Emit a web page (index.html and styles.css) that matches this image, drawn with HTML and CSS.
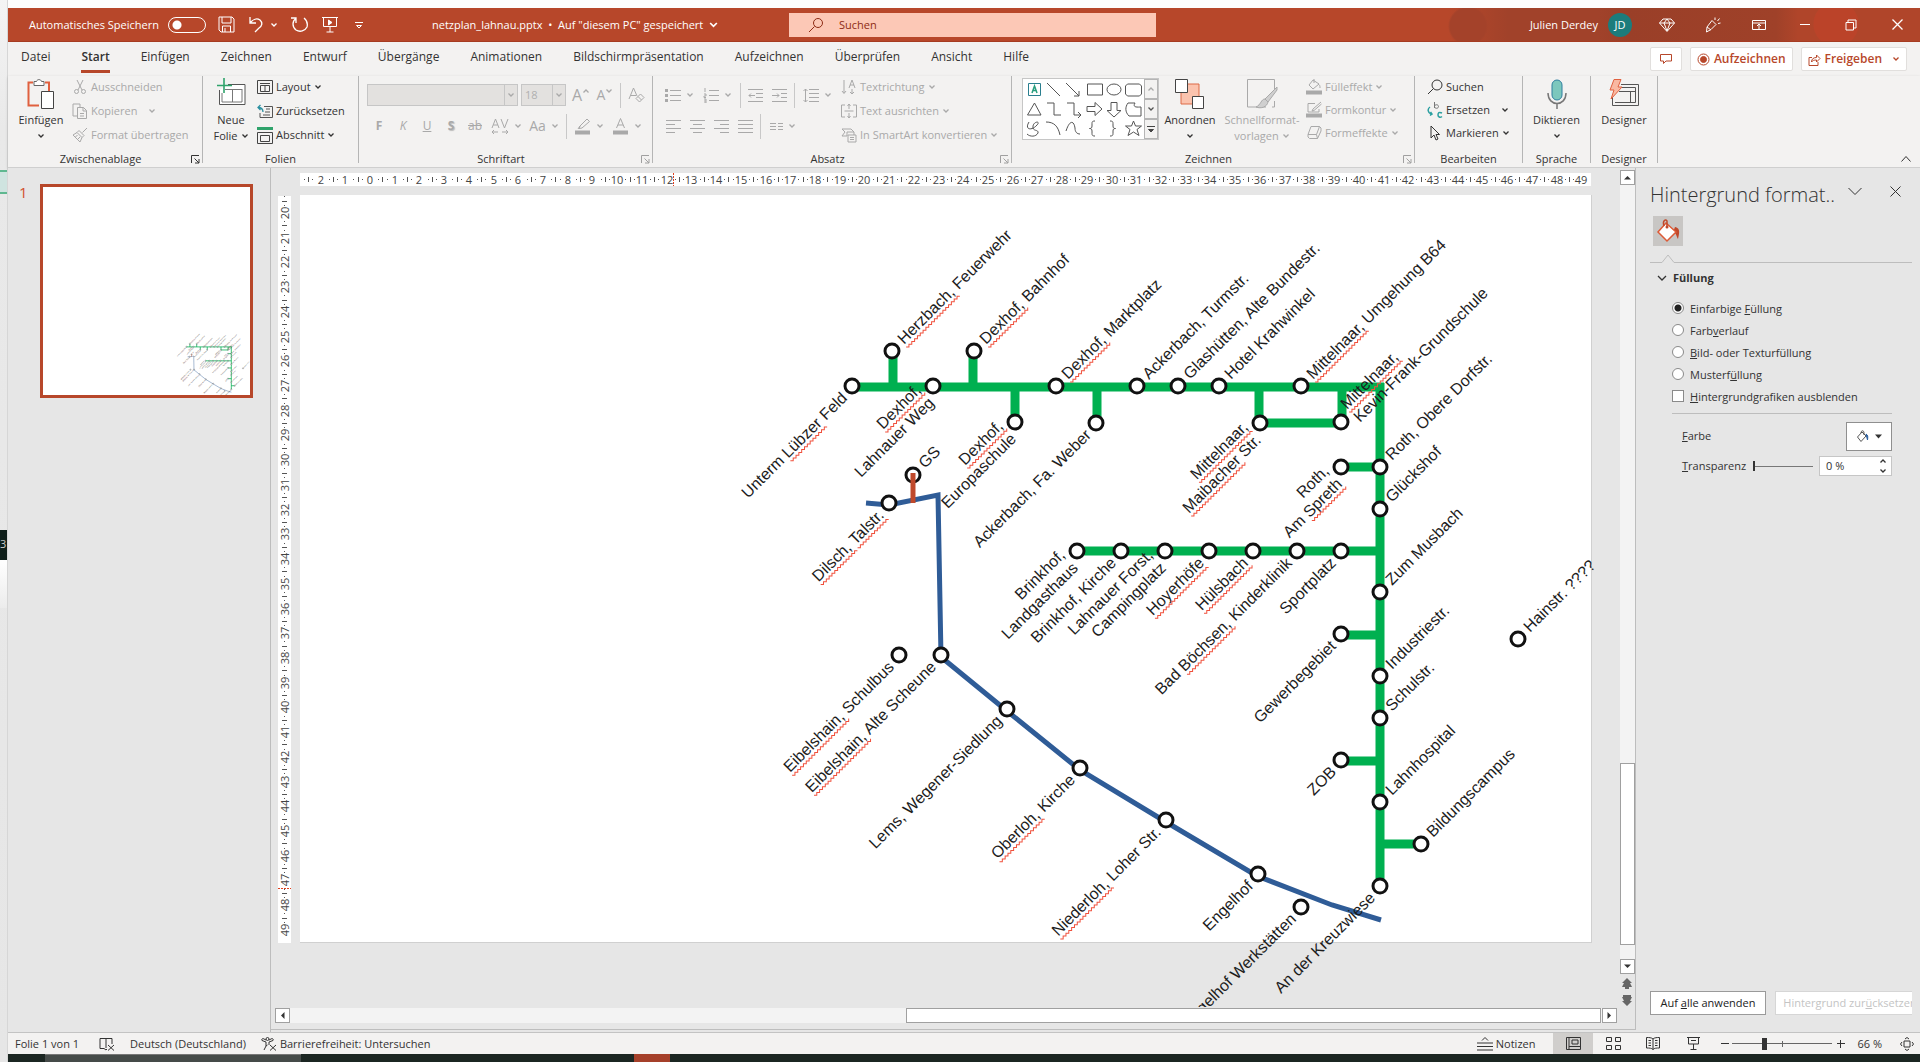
FILE: index.html
```html
<!DOCTYPE html>
<html lang="de">
<head>
<meta charset="utf-8">
<title>netzplan_lahnau.pptx - PowerPoint</title>
<link rel="stylesheet" href="styles.css">
</head>
<body>
<svg class="defs" width="0" height="0" aria-hidden="true">
  <symbol id="chev" viewBox="0 0 8 6"><path d="M1.500 1.500 4 4l2.500-2.500" fill="none" stroke="currentColor" stroke-width="1.300"/></symbol>
  <symbol id="launch" viewBox="0 0 9 9"><path d="M.5 8V.5H8M3.500 3.500 8 8M8 4v4H4" fill="none" stroke="currentColor"/></symbol>
</svg>

<div class="behind">
  <span class="behind-chip"></span>
  <span class="behind-dark">3</span>
  <span class="behind-light"></span>
</div>

<div class="app">
  <header class="titlebar">
    <div class="quick">
      <label class="autosave" for="autosave">Automatisches Speichern</label>
      <input class="toggle" type="checkbox" id="autosave">
      <button class="tb save" aria-label="Speichern"><svg width="17" height="17" viewBox="0 0 17 17"><path d="M1 1h13l2 2v13H3l-2-2zM4 1v6h9V1M4.500 16v-6h8v6M7 12v4"/></svg></button>
      <button class="tb undo" aria-label="Rückgängig"><svg width="17" height="17" viewBox="0 0 17 17"><path d="M2 1v6h6M2 7c3-4 7-5 10-3 3 3 2 6-1 8l-4 4" stroke-width="1.300"/></svg><svg class="chev"><use href="#chev"/></svg></button>
      <button class="tb" aria-label="Wiederholen"><svg width="18" height="17" viewBox="0 0 18 17"><path d="M5 2.500C1 5 1 11 5 14c4 2.500 9 1 11-3 1-4-.5-7-3-9M5 7V2H0" stroke-width="1.300"/></svg></button>
      <button class="tb" aria-label="Bildschirmpräsentation"><svg width="16" height="17" viewBox="0 0 16 17"><path d="M0 1.500h16M1.500 2v8.500h13V2M8 10.500V16M4.500 16h7"/><path class="solid" d="M6.500 4v5L10 6.500z"/></svg></button>
      <button class="tb" aria-label="Symbolleiste anpassen"><svg width="8" height="8" viewBox="0 0 8 8"><path d="M0 1.500h8M1.500 4.500 4 7l2.500-2.500z"/></svg></button>
    </div>
    <button class="doc-title">netzplan_lahnau.pptx&nbsp; •&nbsp; Auf "diesem PC" gespeichert <svg class="chev big"><use href="#chev"/></svg></button>
    <label class="search">
      <svg width="16" height="16" viewBox="0 0 16 16"><circle cx="10" cy="6" r="4.500"/><path d="M6.500 9.500 1 15"/></svg>
      <input type="text" placeholder="Suchen" aria-label="Suchen">
    </label>
    <div class="account">
      <span>Julien Derdey</span><span class="avatar">JD</span>
    </div>
    <div class="winctl">
      <button aria-label="Premium"><svg width="16" height="16" viewBox="0 0 16 16"><path d="M4 2h8l3.500 4L8 14.500.5 6zM.5 6h15M8 2 5 6l3 8 3-8z"/></svg></button>
      <button aria-label="Zeichenstift"><svg width="16" height="16" viewBox="0 0 16 16"><path d="M7 3.500 11 7.500 6 12.500 1.500 15 2 10zM2 10l4 3M10 3V.5M12.500 4l2-2.500M13 6.500l2.500-.5"/></svg></button>
      <button aria-label="Menüband-Anzeigeoptionen"><svg width="14" height="14" viewBox="0 0 14 14"><path d="M.5 2.500h13v9H.5zM.5 5h13M7 11V6.500M5 8l2-2 2 2"/></svg></button>
      <button aria-label="Minimieren"><svg width="10" height="10" viewBox="0 0 10 10"><path d="M0 4.500h10"/></svg></button>
      <button aria-label="Wiederherstellen"><svg width="12" height="12" viewBox="0 0 12 12"><path d="M1 3.500h7.500V11H1zM3 3.500V1h8v8H8.500"/></svg></button>
      <button aria-label="Schließen"><svg width="11" height="11" viewBox="0 0 11 11"><path d="m.5.5 10 10M10.500.5l-10 10" stroke-width="1.300"/></svg></button>
    </div>
  </header>

  <nav class="tabs">
    <a href="#">Datei</a><a href="#" class="on">Start</a><a href="#">Einfügen</a><a href="#">Zeichnen</a><a href="#">Entwurf</a><a href="#">Übergänge</a><a href="#">Animationen</a><a href="#">Bildschirmpräsentation</a><a href="#">Aufzeichnen</a><a href="#">Überprüfen</a><a href="#">Ansicht</a><a href="#">Hilfe</a>
    <div class="tab-actions">
      <button aria-label="Kommentare" class="comment"><svg width="12" height="12" viewBox="0 0 12 12"><path d="M.5 1.500h11V8H6l-2.500 2.500V8h-3z"/></svg></button>
      <button><svg width="13" height="13" viewBox="0 0 13 13"><circle cx="6.500" cy="6.500" r="5.500"/><circle class="dot" cx="6.500" cy="6.500" r="3"/></svg>Aufzeichnen</button>
      <button><svg width="13" height="13" viewBox="0 0 13 13"><path d="M4 4.500H1v8h9V9M3.500 9c0-3 2-4.500 5-4.500V2L12 5.500 8.500 9V7C6 7 4.500 7.500 3.500 9z"/></svg>Freigeben<svg class="chev push"><use href="#chev"/></svg></button>
    </div>
  </nav>

  <section class="ribbon">
    <div class="group g-clip">
      <div class="content">
        <button class="bigbtn"><svg width="28" height="30" viewBox="0 0 28 30"><path d="M6 3.500H1.500v23H12M18 3.500h4V12" fill="none" stroke="#e0603f" stroke-width="2"/><path d="M7 6.500v-4h2.500c.5-2.500 4.500-2.500 5 0H17v4z" fill="#fff" stroke="#666"/><path d="M14.500 12.500h12v17h-12z" fill="#fff" stroke="#444"/></svg><span>Einfügen</span><svg class="chev"><use href="#chev"/></svg></button>
        <div class="rows off">
          <button><svg width="16" height="16" viewBox="0 0 16 16"><path d="M5 1l5 10M11 1 6 11"/><circle cx="4.500" cy="12.500" r="2"/><circle cx="11.500" cy="12.500" r="2"/></svg>Ausschneiden</button>
          <button><svg width="16" height="16" viewBox="0 0 16 16"><path d="M5 13H1V1h7v3M5.500 4.500h6l3 3v8h-9zM11 4.500V8h3.500M8 10.500h4M8 13h4"/></svg>Kopieren <svg class="chev gap"><use href="#chev"/></svg></button>
          <button><svg width="16" height="16" viewBox="0 0 16 16"><path d="M15 1 10.500 5.500M7 3.500l5 5-2 2-5-5zM5 5.500 1 8l7 7 2-4.500M3.500 9.500l2-1M6 12l2-2"/></svg>Format übertragen</button>
        </div>
      </div>
      <footer><span>Zwischenablage</span><button class="launch" aria-label="Dialog"><svg><use href="#launch"/></svg></button></footer>
    </div>

    <div class="group g-slides">
      <div class="content">
        <button class="bigbtn"><svg width="30" height="30" viewBox="0 0 30 30"><path d="M12 6.500h17v20H3.500V12" fill="#fff" stroke="#555"/><path d="M9 11.500h17M6 15v9h20V11M16.500 12v12" fill="none" stroke="#777"/><path d="M8 0v15M1 7.500h15" stroke="#2fa36b" stroke-width="1.600"/></svg><span>Neue</span><span>Folie <svg class="chev"><use href="#chev"/></svg></span></button>
        <div class="rows">
          <button><svg width="16" height="14" viewBox="0 0 16 14"><path d="M.5.5h15v13H.5zM3 3.500h10M3.500 5.500v6h9v-6zM8 5.500v6" stroke="#444"/></svg>Layout <svg class="chev"><use href="#chev"/></svg></button>
          <button><svg width="16" height="15" viewBox="0 0 16 15"><path d="M7 2.500h8.500v11H3V9M9 5h4M8 8h5M6 11h7" stroke="#555"/><path d="M6 8c0-3-1-4.500-5-4.500M3.500 1 1 3.500 3.500 6" stroke="#2a8fa0" stroke-width="1.300"/></svg>Zurücksetzen</button>
          <button><svg width="16" height="17" viewBox="0 0 16 17"><path d="M0 1.500h16" stroke="#2fa36b" stroke-width="3"/><path d="M.5 5.500h15v11H.5zM3.500 8.500h9v6h-9z" stroke="#444"/></svg>Abschnitt <svg class="chev"><use href="#chev"/></svg></button>
        </div>
      </div>
      <footer><span>Folien</span></footer>
    </div>

    <div class="group g-font">
      <div class="content tools off">
        <div class="line">
          <span class="combo wide"><select disabled aria-label="Schriftart"><option></option></select><svg class="chev"><use href="#chev"/></svg></span>
          <span class="combo"><select disabled aria-label="Schriftgrad"><option>18</option></select><svg class="chev"><use href="#chev"/></svg></span>
          <button class="t" aria-label="Schrift vergrößern"><span class="fs16">A</span><svg class="chev flip"><use href="#chev"/></svg></button>
          <button class="t" aria-label="Schrift verkleinern"><span class="fs14">A</span><svg class="chev lift"><use href="#chev"/></svg></button>
          <i class="sep"></i>
          <button class="t" aria-label="Formatierung löschen"><svg width="17" height="17" viewBox="0 0 17 17"><path d="M1 12 5.500 1 9 9M3 8.500h5M12.500 7 16 10.500 11.500 15 8 11.500zM10 9.500l3.500 3.500"/></svg></button>
        </div>
        <div class="line">
          <button class="t"><b>F</b></button><button class="t"><i>K</i></button><button class="t"><u>U</u></button><button class="t"><b class="shade">S</b></button><button class="t"><s>ab</s></button>
          <button class="t dd" aria-label="Zeichenabstand"><svg width="18" height="17" viewBox="0 0 18 17"><path d="M1 10 4.500 1 8 10M2.300 7h4.400M10 1l3.500 9L17 1M1 14h6M3 12l-2 2 2 2M11 14h6M15 12l2 2-2 2"/></svg><svg class="chev"><use href="#chev"/></svg></button>
          <button class="t dd"><span class="fs14">Aa</span><svg class="chev"><use href="#chev"/></svg></button>
          <i class="sep"></i>
          <button class="t dd" aria-label="Texthervorhebungsfarbe"><svg width="17" height="17" viewBox="0 0 17 17"><path d="M13 1l2.500 2.500L8 10l-3 .5L6 8zM6 8 4 11"/><path d="M1 14.500h15" stroke-width="4"/></svg><svg class="chev"><use href="#chev"/></svg></button>
          <button class="t dd" aria-label="Schriftfarbe"><svg width="17" height="17" viewBox="0 0 17 17"><path d="M4.500 10 8.500.5l4 9.500M6 7h5"/><path d="M1 14.500h15" stroke-width="4"/></svg><svg class="chev"><use href="#chev"/></svg></button>
        </div>
      </div>
      <footer class="dim"><span>Schriftart</span><button class="launch" aria-label="Dialog"><svg><use href="#launch"/></svg></button></footer>
    </div>

    <div class="group g-para">
      <div class="content off">
        <div class="tools">
          <div class="line">
            <button class="t dd" aria-label="Aufzählung"><svg width="16" height="15" viewBox="0 0 16 15"><path d="M5 2.500h11M5 7.500h11M5 12.500h11"/><path d="M0 2.500h3M0 7.500h3M0 12.500h3" stroke-width="3"/></svg><svg class="chev"><use href="#chev"/></svg></button>
            <button class="t dd" aria-label="Nummerierung"><svg width="16" height="15" viewBox="0 0 16 15"><path d="M6 2.500h10M6 7.500h10M6 12.500h10M2 0v4M1 6h2v2H1v1.500h2M1 11h2v4H1M1 13h2"/></svg><svg class="chev"><use href="#chev"/></svg></button>
            <i class="sep"></i>
            <button class="t" aria-label="Einzug verkleinern"><svg width="15" height="15" viewBox="0 0 15 15"><path d="M0 1.500h15M8 5.500h7M8 9.500h7M0 13.500h15M1 7.500h6M3 5.500l-2 2 2 2"/></svg></button>
            <button class="t" aria-label="Einzug vergrößern"><svg width="15" height="15" viewBox="0 0 15 15"><path d="M0 1.500h15M9 5.500h6M9 9.500h6M0 13.500h15M0 7.500h7M5 5.500l2 2-2 2"/></svg></button>
            <i class="sep"></i>
            <button class="t dd" aria-label="Zeilenabstand"><svg width="16" height="15" viewBox="0 0 16 15"><path d="M6 1.500h10M6 5.500h10M6 9.500h10M6 13.500h10M2.500 1v13M.5 3l2-2 2 2M.5 12l2 2 2-2"/></svg><svg class="chev"><use href="#chev"/></svg></button>
          </div>
          <div class="line">
            <button class="t" aria-label="Linksbündig"><svg width="15" height="14" viewBox="0 0 15 14"><path d="M0 1.500h15M0 5.500h9M0 9.500h15M0 13.500h9"/></svg></button>
            <button class="t" aria-label="Zentriert"><svg width="15" height="14" viewBox="0 0 15 14"><path d="M0 1.500h15M3 5.500h9M0 9.500h15M3 13.500h9"/></svg></button>
            <button class="t" aria-label="Rechtsbündig"><svg width="15" height="14" viewBox="0 0 15 14"><path d="M0 1.500h15M6 5.500h9M0 9.500h15M6 13.500h9"/></svg></button>
            <button class="t" aria-label="Blocksatz"><svg width="15" height="14" viewBox="0 0 15 14"><path d="M0 1.500h15M0 5.500h15M0 9.500h15M0 13.500h15"/></svg></button>
            <i class="sep"></i>
            <button class="t dd" aria-label="Spalten"><svg width="13" height="9" viewBox="0 0 13 9"><path d="M0 1.500h6M0 4.500h6M0 7.500h6M8 1.500h5M8 4.500h5M8 7.500h5"/></svg><svg class="chev"><use href="#chev"/></svg></button>
          </div>
        </div>
        <div class="rows">
          <button><svg width="16" height="16" viewBox="0 0 16 16"><path d="M3 1v13M1 12l2 2.500L5 12M8 9l3-8 3 8M9 6h4M11 10v5M9 13l2 2 2-2"/></svg>Textrichtung <svg class="chev"><use href="#chev"/></svg></button>
          <button><svg width="16" height="16" viewBox="0 0 16 16"><path d="M4 2H.5v12H4M12 2h3.500v12H12M8 1v5M6.500 3 8 1l1.500 2M8 15v-5M6.500 13 8 15l1.500-2M3.500 8h9"/></svg>Text ausrichten <svg class="chev"><use href="#chev"/></svg></button>
          <button><svg width="16" height="16" viewBox="0 0 16 16"><path d="M1 2h9l3 3M1 2l3 3-3 4h5V5h7v3M7 8h8v7H7zM9 10.500h4M9 12.500h4"/></svg>In SmartArt konvertieren <svg class="chev"><use href="#chev"/></svg></button>
        </div>
      </div>
      <footer class="dim"><span>Absatz</span><button class="launch" aria-label="Dialog"><svg><use href="#launch"/></svg></button></footer>
    </div>

    <div class="group g-draw">
      <div class="content">
        <div class="gallery">
          <svg width="121" height="60" viewBox="0 0 121 60">
            <path d="M5.500 4.500h12v12h-12z" stroke="#2a7f8f"/><path d="M9 14l2.500-7 2.500 7M10 11.500h3" stroke="#2a9f7f" stroke-width="1.500"/>
            <path d="m24 4 13 13M43 4l13 13M56 12v5h-5M64.500 5h15v11h-15zM104.500 5h12l2 2v8l-2 2h-12l-2-2V7z"/><ellipse cx="91" cy="10.500" rx="7" ry="5.500"/>
            <path d="M4.500 36 11.500 24l6.500 12zM24 24h7v12h7M44 24h7v12h7M55 33l3 3-3 3M64 27.500h8v-4l7 6.500-7 6.500v-4h-8zM88 23.500h6v8h4L91 38l-7-6.500h4zM105 24h7c-3 5 3 4 6 4v9h-12c-4-4-4-9-1-13z"/>
            <path d="M6 43c-5 8 3 9 8 3 4-4-3-4-4 1-1 6 6 3 5 7-2 4-8 4-11 1M23 43c8 0 12 4 14 13M43 52c4-12 8-10 9-3 0 4 2 6 5 6M72 42c-3 0-3 1-3 3v2c0 2-1 2.500-2.500 2.500C68 49.500 69 50 69 52v2c0 2 0 3 3 3M87 42c3 0 3 1 3 3v2c0 2 1 2.500 2.500 2.500C91 49.500 90 50 90 52v2c0 2 0 3-3 3M110.500 42l2 5h6l-4.500 3.500 2 6-5.500-3.500-5.500 3.500 2-6-4.500-3.500h6z"/>
          </svg>
          <div class="gscroll">
            <button class="off" aria-label="Zurück"><svg class="chev flip"><use href="#chev"/></svg></button>
            <button aria-label="Weiter"><svg class="chev"><use href="#chev"/></svg></button>
            <button aria-label="Mehr"><svg width="8" height="8" viewBox="0 0 8 8"><path d="M0 1.500h8M1.500 4.500 4 7l2.500-2.500z" stroke="#444" fill="#444"/></svg></button>
          </div>
        </div>
        <button class="bigbtn arrange"><svg width="30" height="30" viewBox="0 0 30 30"><path d="M6 5h18v20H6z" fill="#fbc3ae" stroke="#dd6a47"/><path d="M.5.5h12v13H.5zM17.500 17.500h11v12h-11z" fill="#fff" stroke="#444"/></svg><span>Anordnen</span><svg class="chev"><use href="#chev"/></svg></button>
        <button class="bigbtn styles off"><svg width="32" height="30" viewBox="0 0 32 30"><path d="M20 28H1.500V.5h27V10M28.500 22v6H26"/><path d="M31 8 19 20l3 3 9-12zM19 20c-4 0-4 6-9 8 5 2 11 0 12-5z" fill="#cfcfcf"/></svg><span>Schnellformat-</span><span>vorlagen <svg class="chev"><use href="#chev"/></svg></span></button>
        <div class="rows tight off">
          <button><svg width="16" height="17" viewBox="0 0 16 17"><path d="M7 2 3 7l4 4 6-5zM8 5V1M12 6c2 1 2 2 2 4"/><path d="M0 14.500h16" stroke-width="4"/></svg>Fülleffekt <svg class="chev"><use href="#chev"/></svg></button>
          <button><svg width="16" height="17" viewBox="0 0 16 17"><path d="M9 2.500H2V11h11V8M15 1 7 8l-1 2 2-.5L15.500 3"/><path d="M0 14.500h16" stroke-width="4"/></svg>Formkontur <svg class="chev"><use href="#chev"/></svg></button>
          <button><svg width="16" height="15" viewBox="0 0 16 15"><path d="M5 1.500h8.500l-3 8H2zM2 9.500V12l1.500 1.500h8L15 6V3l-1.500-1.500M10.500 9.500l1 4"/></svg>Formeffekte <svg class="chev"><use href="#chev"/></svg></button>
        </div>
      </div>
      <footer class="dim"><span>Zeichnen</span><button class="launch" aria-label="Dialog"><svg><use href="#launch"/></svg></button></footer>
    </div>

    <div class="group g-edit">
      <div class="content">
        <div class="rows tight">
          <button><svg width="16" height="16" viewBox="0 0 16 16"><circle cx="10" cy="6" r="5"/><path d="M6.500 9.500 1 15"/></svg>Suchen</button>
          <button><svg width="16" height="16" viewBox="0 0 16 16"><path d="M7.500 0v6M7.500 4c1-2 4-1.500 4 .5s-3 2.500-4 .5" stroke="#777"/><path d="M3 5c-3 2-2 6 1 7M3 13.500 5 12l-1.500-2M15 11c-3-1.500-4 0-4 2s2 3 4 1.500" stroke="#2a9fa0" stroke-width="1.500"/></svg>Ersetzen <svg class="chev gap"><use href="#chev"/></svg></button>
          <button><svg width="16" height="16" viewBox="0 0 16 16"><path d="M4 1v12l3-3 2 5 2-1-2-4.500h3.500z"/></svg>Markieren <svg class="chev"><use href="#chev"/></svg></button>
        </div>
      </div>
      <footer><span>Bearbeiten</span></footer>
    </div>

    <div class="group g-voice">
      <div class="content">
        <button class="bigbtn"><svg width="20" height="30" viewBox="0 0 20 30"><rect x="5" y="1" width="10" height="20" rx="5" fill="#7cc7bd" stroke="#2f7f9f"/><path d="M1 14c0 14 18 14 18 0M10 24v6" stroke="#777" stroke-width="1.500"/></svg><span>Diktieren</span><svg class="chev"><use href="#chev"/></svg></button>
      </div>
      <footer><span>Sprache</span></footer>
    </div>

    <div class="group g-designer">
      <div class="content">
        <button class="bigbtn"><svg width="30" height="30" viewBox="0 0 30 30"><path d="M3.500 17v9.500h26v-21H12M6 23.500h20.500v-15H12M10 12.500h16.500M21.500 12.500v11" stroke="#555" fill="none"/><path d="M5 .5h7L9 8h4L2 20l3-9H1z" fill="#f9b9a2" stroke="#e0603f"/></svg><span>Designer</span></button>
      </div>
      <footer><span>Designer</span></footer>
    </div>
    <button class="collapse" aria-label="Menüband reduzieren"><svg width="12" height="8" viewBox="0 0 12 8"><path d="m1.500 6.500 4.500-5 4.500 5"/></svg></button>
  </section>

  <main class="body">
    <aside class="slides">
      <span class="num">1</span>
      <button class="thumb" aria-label="Folie 1"><svg viewBox="43 187 207 208"><use href="#network" transform="translate(114 314) scale(.085)"/></svg></button>
    </aside>

    <section class="workspace">
      <svg class="hruler" id="hruler"></svg>
      <svg class="vruler" id="vruler"></svg>
      <div class="canvas">
        <svg width="1318" height="814" viewBox="300 195 1318 814">
          <rect x="299.500" y="194.500" width="1292" height="748" fill="#fff" stroke="#d0d0d0"/>
          <g id="network">
            <g class="green">
              <path d="M852 387H1384M1380 383V886M893 387V351M973 387V351M1015 387V422M1097 387V422M1259 387V423H1342V387M1341 467H1380M1077 551H1380M1341 635H1380M1341 761H1380M1380 844H1421"/>
            </g>
            <path class="blue" d="M866 503 889 505 938 495 941 657 1007 711 1080 770 1166 822 1257 876 1332 905 1381 920"/>
            <g id="stops"></g>
            <path class="orange" d="M913 473V503"/>
            <g id="labels"></g>
          </g>
        </svg>
      </div>
      <div class="vscroll">
        <button aria-label="Nach oben"><svg width="7" height="5" viewBox="0 0 7 5"><path d="M0 4.500 3.500 1 7 4.500z"/></svg></button>
        <div class="track"><div class="grip"></div></div>
        <button aria-label="Nach unten"><svg width="7" height="5" viewBox="0 0 7 5"><path d="M0 .5 3.500 4 7 .5z"/></svg></button>
        <a href="#" aria-label="Vorherige Folie"><svg width="10" height="12" viewBox="0 0 10 12"><path d="M5 0 0 5h2L0 9h3v2h4V9h3L8 5h2z"/></svg></a>
        <a href="#" aria-label="Nächste Folie"><svg width="10" height="12" viewBox="0 0 10 12"><path d="M5 12 0 7h2L0 3h1V1h8v2h1L8 7h2z"/></svg></a>
      </div>
      <div class="hscroll">
        <button aria-label="Nach links"><svg width="5" height="7" viewBox="0 0 5 7"><path d="M4.500 0 1 3.500 4.500 7z"/></svg></button>
        <div class="track"><div class="grip"></div></div>
        <button aria-label="Nach rechts"><svg width="5" height="7" viewBox="0 0 5 7"><path d="M.5 0 4 3.500.5 7z"/></svg></button>
      </div>
    </section>

    <aside class="pane">
      <header><h2>Hintergrund format..</h2>
        <button aria-label="Optionen"><svg width="14" height="9" viewBox="0 0 14 9"><path d="m.5 1 6.500 6.500L13.500 1"/></svg></button>
        <button aria-label="Schließen"><svg width="11" height="11" viewBox="0 0 11 11"><path d="m.5.5 10 10M10.500.5l-10 10"/></svg></button></header>
      <button class="filltab" aria-label="Füllung"><svg width="24" height="24" viewBox="0 0 24 24"><path d="M19 8c6 1 4 7 3 12-2-3-1-5-5-7z" fill="#c0492b"/><path d="m10 4 10 9-9 9-9-9z" fill="#fff" stroke="#dd5a36" stroke-width="1.500"/><path d="M8 7C6 1 10 0 11 2v6" fill="none" stroke="#c0492b" stroke-width="1.500"/><circle cx="11" cy="8" r="1.500" fill="#c0492b"/></svg></button>
      <svg class="notch" height="9"><path d="M0 8.500H12L18 1l6 7.500H262"/></svg>
      <form>
        <h3><svg width="10" height="7" viewBox="0 0 10 7"><path d="M1 1l4 4 4-4" stroke-width="1.300"/></svg>Füllung</h3>
        <label><input type="radio" name="fill" checked>Einfarbige <u>F</u>üllung</label>
        <label><input type="radio" name="fill">Farb<u>v</u>erlauf</label>
        <label><input type="radio" name="fill"><span><u>B</u>ild- oder Texturfüllung</span></label>
        <label><input type="radio" name="fill">Musterf<u>ü</u>llung</label>
        <label><input type="checkbox"><span><u>H</u>intergrundgrafiken ausblenden</span></label>
        <hr>
        <div class="prop"><label for="color"><u>F</u>arbe</label><button type="button" id="color" class="color" aria-label="Farbe"><svg width="13" height="13" viewBox="0 0 13 13"><path d="M6 2 1.500 7 5 11.500 10 6z" fill="#fff" stroke="#555"/><path d="M5 3c0-3 3-3 3 0v2" fill="none" stroke="#555"/><path d="M10 4c2 1 2 3 1.500 6z" fill="#2a5fa0" stroke="#2a5fa0"/></svg><svg width="7" height="5" viewBox="0 0 7 5"><path d="M0 .5h7L3.500 4.500z" fill="#333"/></svg></button></div>
        <div class="prop"><label for="alpha"><u>T</u>ransparenz</label><input type="range" id="alpha" value="0"><span class="spin"><input type="text" value="0 %" aria-label="Transparenz in Prozent"><span><svg class="chev flip"><use href="#chev"/></svg><svg class="chev"><use href="#chev"/></svg></span></span></div>
      </form>
      <footer><button>Auf <u>a</u>lle anwenden</button><button disabled>Hintergrund zur<u>ü</u>cksetzen</button></footer>
    </aside>
  </main>

  <footer class="status">
    <span class="s-slide">Folie 1 von 1</span>
    <button class="s-spell" aria-label="Rechtschreibung"><svg width="16" height="14" viewBox="0 0 16 14"><path d="M7 1v10M7 1.500H1v10h4l2 1.500 1-1M7 1.500h6V7M9 8l6 5.500M15 8l-6 5.500"/></svg></button>
    <button class="s-lang">Deutsch (Deutschland)</button>
    <button class="s-acc"><svg width="16" height="14" viewBox="0 0 16 14"><circle cx="6.500" cy="2" r="1.500"/><path d="M1 3.500 5 5v4l-2 4M12 3.500 8 5v3M5 9l1.500-1M1 3.500C0 2 2 1 3 2l2 1M12 3.500c1-1.500-1-2.500-2-1.500L8 3M9 8l6 5.500M15 8l-6 5.500"/></svg>Barrierefreiheit: Untersuchen</button>
    <div class="views">
      <button class="notes"><svg width="16" height="14" viewBox="0 0 16 14"><path d="M0 6h16M0 9.500h16M0 13h16M5 3.500l3-3 3 3"/></svg>Notizen</button>
      <button class="view on" aria-label="Normal"><svg width="15" height="13" viewBox="0 0 15 13"><path d="M.5.5h14v12H.5zM3 .5v12M3 9.500h11M6 3h6v4H6z"/></svg></button>
      <button class="view" aria-label="Foliensortierung"><svg width="15" height="13" viewBox="0 0 15 13"><path d="M.5.5h5v4h-5zM9.500.5h5v4h-5zM.5 8.500h5v4h-5zM9.500 8.500h5v4h-5z"/></svg></button>
      <button class="view" aria-label="Leseansicht"><svg width="14" height="13" viewBox="0 0 14 13"><path d="M7 2v10.500M7 2C5.500.5 3 .5.5.5V11c3 0 5 0 6.500 1.500C8.500 11 10.500 11 13.500 11V.5C11 .5 8.500.5 7 2M2.500 3.500H5M2.500 6H5M2.500 8.500H5M9 3.500h2.500M9 6h2.500M9 8.500h2.500"/></svg></button>
      <button class="view" aria-label="Bildschirmpräsentation"><svg width="13" height="13" viewBox="0 0 13 13"><path d="M0 .5h13M1.500.5V7h10V.5M6.500 7v5.500M3.500 12.500h6M4 3.500h5"/></svg></button>
      <button class="zoomb" aria-label="Verkleinern"><svg width="8" height="8" viewBox="0 0 8 8"><path d="M0 3.500h8"/></svg></button>
      <input type="range" class="zoom" min="10" max="190" value="66" aria-label="Zoom">
      <button class="zoomb" aria-label="Vergrößern"><svg width="8" height="8" viewBox="0 0 8 8"><path d="M0 3.500h8M3.500 0v8"/></svg></button>
      <button class="pct">66 %</button>
      <button class="fit" aria-label="An Fenster anpassen"><svg width="14" height="14" viewBox="0 0 14 14"><path d="M4 4h6v6H4zM5 2l2-1.500L9 2M5 12l2 1.500L9 12M2 5 .5 7 2 9M12 5l1.500 2L12 9"/></svg></button>
    </div>
  </footer>
  <div class="taskbar"><i class="field"></i><i class="active"></i></div>
</div>
<script src="script.js"></script>
</body>
</html>
```
FILE: styles.css
```css
* { box-sizing: border-box; }
body {
  margin: 0; height: 100vh; display: flex; overflow: hidden;
  font: 11px/16px "Open Sans", "Noto Sans", sans-serif; color: #333; background: #e6e6e6;
}
button, input, select { font: inherit; color: inherit; margin: 0; padding: 0; border: 0; background: none; }
button { display: flex; align-items: center; justify-content: center; white-space: nowrap; }
a { color: inherit; text-decoration: none; }
svg { display: block; flex: none; fill: none; stroke: currentColor; }
h2, h3 { margin: 0; }
.defs { position: absolute; }
.chev { width: 8px; height: 6px; stroke: none; }
.chev.big { width: 11px; height: 8px; }
.chev.flip { transform: rotate(180deg); }
.chev.gap { margin-left: 8px; }
.off { color: #a9a9a9; }

/* sliver of the window behind */
.behind { flex: 0 0 8px; display: flex; flex-direction: column; border-right: 1px solid #d6d6d6; background: linear-gradient(#f4f4f4, #e9e9e9 12%, #e6e6e6); overflow: hidden; }
.behind-chip { height: 24px; margin-top: 170px; background: #cfe4e0; border-top: 2px solid #5fb890; border-bottom: 2px solid #5fb890; }
.behind-dark { height: 30px; margin-top: 336px; background: #10201b; color: #ccc; line-height: 28px; }
.behind-light { height: 48px; background: linear-gradient(#fff, #ececec); }

.app { flex: 1; min-width: 0; display: flex; flex-direction: column; border-top: 8px solid #fdfdfd; }

/* title bar */
.titlebar {
  flex: 0 0 34px; display: flex; align-items: center; color: #fff; border-bottom: 1px solid #a63c22;
  background:
    radial-gradient(circle at 1460px 18px, #a4422a 18px, transparent 20px),
    radial-gradient(circle at 1828px 16px, #bb4329 22px, transparent 23px),
    linear-gradient(90deg, transparent 1440px, #a1422a 1500px, #a1422a 1590px, #9a3f28 1620px, #9f4129 1768px, #b0452a 1790px) #b7472a;
}
.quick { width: 424px; padding-left: 21px; display: flex; align-items: center; }
.toggle { appearance: none; width: 38px; height: 16px; margin: 0 12px 0 9px; border: 1px solid #fff; border-radius: 8px; background: radial-gradient(circle at 8px 7px, #fff 4px, transparent 5px); }
.tb { margin-right: 13px; gap: 5px; }
.tb:nth-last-child(2) { margin-right: 17px; }
.tb:nth-last-child(n+3) + .tb { margin-left: 0; }
.tb .solid { fill: #fff; }
.doc-title { gap: 5px; width: 300px; justify-content: flex-start; }
.search { width: 367px; height: 24px; margin-left: 57px; display: flex; align-items: center; gap: 15px; padding-left: 19px; background: #fcc8b6; color: #8e2b14; }
.search input { flex: 1; outline: 0; }
.search input::placeholder { color: #8e2b14; opacity: 1; }
.account { margin-left: auto; display: flex; align-items: center; gap: 10px; }
.avatar { width: 24px; height: 24px; border-radius: 50%; background: #1c7c7c; line-height: 24px; text-align: center; }
.winctl { display: flex; margin-left: 12px; }
.winctl button { width: 46px; height: 33px; }

/* tabs */
.tabs { flex: 0 0 34px; display: flex; align-items: center; gap: 31px; padding: 0 13px; background: #f3f2f1; font-size: 12px; }
.tabs > a { height: 28px; line-height: 24px; border-bottom: 3px solid transparent; }
.tabs > a.on { border-color: #b7472a; font-weight: 600; }
.tab-actions { margin-left: auto; display: flex; gap: 8px; }
.tab-actions button { height: 24px; padding: 0 6px; gap: 4px; background: #fff; border: 1px solid #e1dfdd; border-radius: 2px; color: #b7472a; font-weight: 600; }
.tab-actions .comment { width: 32px; padding: 0; }
.tab-actions .dot { fill: #b7472a; }
.push { margin-left: 6px; }

/* ribbon */
.ribbon { flex: 0 0 92px; display: flex; background: #f3f2f1; border-bottom: 1px solid #cfcfcf; box-shadow: 0 1px 3px rgba(0, 0, 0, .15); }
.group { height: 87px; border-right: 1px solid #b5b5b5; display: flex; flex-direction: column; flex: none; }
.g-clip { width: 195px; } .g-slides { width: 156px; } .g-font { width: 294px; } .g-para { width: 359px; }
.g-draw { width: 403px; } .g-edit { width: 108px; } .g-voice { width: 68px; } .g-designer { width: 67px; }
.content { flex: none; height: 75px; display: flex; }
.group > footer { flex: none; display: flex; align-items: center; height: 16px; padding: 0 2px; }
.group > footer span { flex: 1; text-align: center; }
.launch svg { width: 9px; height: 9px; }
.dim .launch { color: #a0a0a0; }
.bigbtn { flex: none; width: 62px; flex-direction: column; justify-content: flex-start; padding-top: 3px; }
.bigbtn > svg:first-child { margin-bottom: 3px; }
.bigbtn > span { display: flex; align-items: center; gap: 3px; }
.bigbtn > .chev { margin-top: 5px; }
.g-clip .bigbtn { margin-left: 2px; }
.g-slides .bigbtn { width: 52px; margin-left: 2px; padding-top: 2px; }
.g-slides .bigbtn > svg:first-child { margin-bottom: 4px; }
.g-voice .bigbtn, .g-designer .bigbtn { width: 100%; }
.rows { display: flex; flex-direction: column; align-items: flex-start; margin-top: -1px; }
.rows button { height: 24px; gap: 3px; }
.rows.tight button { height: 23px; }
.g-edit .rows { padding-left: 12px; }
.tools { display: flex; flex-direction: column; gap: 9px; padding: 8px 0 0 8px; }
.line { display: flex; align-items: center; height: 22px; }
.sep { width: 1px; height: 25px; background: #c8c8c8; margin: 0 3px; }
.t { width: 24px; height: 22px; font-size: 12px; }
.t.dd { width: 38px; gap: 5px; }
.fs16 { font-size: 16px; } .fs14 { font-size: 14px; }
.shade { text-shadow: 1px 1px 1px #bbb; }
.lift, .t .flip { margin-bottom: 8px; }
.combo { display: flex; align-items: center; width: 45px; height: 22px; margin-right: 3px; background: #e3e1df; border: 1px solid #c6c6c6; }
.combo.wide { width: 151px; }
.combo select { appearance: none; flex: 1; min-width: 0; height: 20px; padding-left: 3px; border-right: 1px solid #c6c6c6; color: #b0b0b0; opacity: 1; }
.combo svg { margin: 0 2px; }
.g-para .rows { padding-left: 5px; }
.g-para .tools { width: 183px; }
.gallery { width: 137px; height: 62px; margin: 2px 0 0 10px; display: flex; background: #fff; border: 1px solid #c6c6c6; color: #555; flex: none; }
.gscroll { flex: 1; display: flex; flex-direction: column; }
.gscroll button { flex: 1; border: 1px solid #b5b5b5; background: #f3f2f1; }
.arrange { width: 62px; }
.styles { width: 82px; }
.g-draw .tight { padding-left: 3px; }
.collapse { margin: auto 8px 4px auto; }

/* work area */
.body { flex: 1; min-height: 0; display: flex; background: #e6e6e6; }
.slides { flex: 0 0 263px; display: flex; align-items: flex-start; padding: 16px 0 0 11px; border-right: 1px solid #bdbdbd; }
.slides .num { width: 21px; font-size: 15px; color: #d2512f; line-height: 16px; }
.thumb { width: 213px; border: 3px solid #b7472a; background: #fff; }
.thumb svg { width: 207px; height: 208px; stroke: none; }
.workspace { flex: 1; min-width: 0; display: grid; grid-template: 27px minmax(0, 1fr) 22px / 29px minmax(0, 1fr) 18px; border-bottom: 1px solid #bdbdbd; border-right: 1px solid #bdbdbd; margin-bottom: 2px; }
.hruler { grid-area: 1 / 2; width: 1291px; max-width: 100%; height: 13px; margin-top: 5px; background: #fff; stroke: none; }
.vruler { grid-area: 2 / 1; width: 13px; height: 747px; margin: 1px 0 0 7px; background: #fff; stroke: none; }
.hruler text, .vruler text { font-size: 11px; fill: #444; text-anchor: middle; }
.mark { stroke: #e0401c; stroke-width: 1px; stroke-dasharray: 2 1; }
.canvas { grid-area: 2 / 2; overflow: hidden; }
.canvas > svg { stroke: none; }
.green path { stroke: #00b050; stroke-width: 9px; fill: none; }
.blue { stroke: #2f5c97; stroke-width: 5px; fill: none; }
.orange { stroke: #c0492b; stroke-width: 5px; }
#stops circle { fill: #fff; stroke: #111; stroke-width: 3px; }
#labels text { font: 16px "Liberation Sans", Arial, sans-serif; fill: #1c1c1c; stroke: none; }
.wave { fill: none; stroke: #f0503c; stroke-width: 1px; }
.vscroll { grid-area: 1 / 3 / 3 / 4; display: flex; flex-direction: column; align-items: center; padding: 2px 0 1px 2px; }
.hscroll { grid-area: 3 / 1 / 4 / 4; display: flex; height: 15px; margin: 1px 18px 0 4px; }
.vscroll button, .hscroll button { width: 15px; height: 15px; border: 1px solid #a0a0a0; background: #fff; flex: none; }
.vscroll svg, .hscroll svg { fill: #333; stroke: none; }
.vscroll a svg { fill: #666; margin-top: 4px; }
.track { flex: 1; display: flex; background: #f3f3f3; }
.vscroll .track { width: 15px; flex-direction: column; justify-content: flex-end; padding-bottom: 14px; }
.hscroll .track { justify-content: flex-end; padding-right: 1px; }
.grip { background: #fff; border: 1px solid #a0a0a0; }
.vscroll .grip { height: 24%; }
.hscroll .grip { width: 53%; }

/* format pane */
.pane { flex: 0 0 284px; padding: 10px 8px 17px 14px; display: flex; flex-direction: column; overflow: hidden; }
.pane header { display: flex; height: 34px; align-items: center; }
.pane h2 { font-size: 20px; font-weight: 300; line-height: 34px; width: 197px; white-space: nowrap; }
.pane header button { width: 15px; height: 26px; align-self: flex-start; }
.pane header button + button { margin-left: 26px; }
.filltab { width: 30px; height: 30px; margin: 4px 0 8px 3px; background: #c8c6c4; }
.filltab svg { stroke: none; }
.notch { width: 262px; stroke: #bdbdbd; }
.pane form { padding: 7px 20px 0 22px; }
.pane h3 { font-size: 11px; font-weight: 700; display: flex; align-items: center; gap: 6px; margin: 0 0 12px -15px; }
.pane form > label { display: flex; align-items: center; height: 22px; white-space: pre; }
.pane input[type=radio], .pane input[type=checkbox] { appearance: none; width: 12px; height: 12px; border: 1px solid #8a8a8a; border-radius: 50%; background: #fff; margin: 0 6px 2px 0; }
.pane input[type=radio]:checked { background: radial-gradient(circle, #222 3px, #fff 4px); }
.pane input[type=checkbox] { border-radius: 0; }
.pane hr { border: 0; border-top: 1px solid #bdbdbd; margin: 5px 0 7px; }
.prop { display: flex; align-items: center; height: 30px; padding-left: 10px; }
.prop label { width: 71px; }
.prop .color { width: 46px; height: 29px; margin-left: auto; gap: 6px; border: 1px solid #8f8f8f; background: #fff; }
.prop .color svg { stroke: none; }
.prop input[type=range] { appearance: none; width: 60px; height: 12px; background: linear-gradient(#777, #777) center / 100% 1px no-repeat; }
input[type=range]::-webkit-slider-thumb { appearance: none; width: 2px; height: 10px; background: #333; }
.spin { display: flex; align-items: center; margin-left: auto; width: 73px; height: 20px; border: 1px solid #c6c6c6; background: #fff; }
.spin input { flex: 1; min-width: 0; padding-left: 6px; }
.spin > span { display: flex; flex-direction: column; gap: 4px; margin-right: 4px; }
.pane > footer { margin-top: auto; display: flex; gap: 9px; overflow: hidden; width: 262px; }
.pane > footer button { flex: none; width: 116px; height: 24px; border: 1px solid #9a9a9a; background: #fff; white-space: pre; color: #222; }
.pane > footer button:disabled { width: 150px; border-color: #d6d6d6; color: #c4c4c4; }

/* status bar */
.status { flex: 0 0 22px; display: flex; align-items: center; padding: 0 6px 0 7px; background: #f3f2f1; border-top: 1px solid #c3c3c3; }
.s-slide { width: 84px; }
.s-lang { margin-left: 15px; }
.s-acc { margin-left: 15px; gap: 3px; }
.views { margin-left: auto; display: flex; align-items: center; align-self: stretch; }
.notes { gap: 3px; margin-right: 18px; }
.view { width: 40px; align-self: stretch; }
.view.on { background: #d0cecc; }
.zoomb { width: 15px; margin-left: 4px; }
.zoomb + .pct { margin: 0 18px 0 9px; }
.zoom { appearance: none; width: 100px; height: 14px; background: linear-gradient(#666, #666) center / 100% 1px no-repeat, linear-gradient(#666, #666) center / 1px 6px no-repeat; }
.status .zoom::-webkit-slider-thumb { width: 5px; height: 12px; }
.zoom + .zoomb { margin-left: 1px; }

/* top edge of the system taskbar */
.taskbar { flex: 0 0 8px; display: flex; background: #1b2622; }
.field { width: 256px; margin-left: 37px; background: #454b49; border-top: 1px solid #777; }
.active { width: 36px; margin-left: 333px; background: #a5402a; }
```
FILE: script.js
```js
const NS = 'http://www.w3.org/2000/svg';

function add(parent, tag, attrs, text) {
  const node = document.createElementNS(NS, tag);
  for (const key in attrs) node.setAttribute(key, attrs[key]);
  if (text !== undefined) node.textContent = text;
  parent.appendChild(node);
  return node;
}

// Rulers: one centimetre of the slide at the current zoom
const CM = 24.72;

function tickMarks(svg, pos, vertical) {
  const mark = (p, a, b) => {
    const q = Math.round(p) + 0.5;
    add(svg, 'path', { d: vertical ? `M${a} ${q}H${b}` : `M${q} ${a}V${b}`, stroke: '#555' });
  };
  mark(pos + CM / 2, 4, 9);
  mark(pos + CM / 4 + 2, 6, 7);
  mark(pos + CM * 3 / 4 - 2, 6, 7);
}

const h = document.getElementById('hruler');
for (let n = -3; n <= 49; n++) {
  const x = 70 + n * CM;
  if (n > -3) add(h, 'text', { x: Math.round(x), y: 11 }, Math.abs(n));
  if (n < 49) tickMarks(h, x, false);
}
add(h, 'path', { d: 'M373.5 0V13', class: 'mark' });

const v = document.getElementById('vruler');
for (let n = 19; n <= 49; n++) {
  const y = 17 + (n - 20) * CM;
  if (n > 19) add(v, 'text', { transform: `translate(11 ${Math.round(y)}) rotate(-90)` }, n);
  if (n < 49) tickMarks(v, y, true);
}
add(v, 'path', { d: 'M0 692.5H13', class: 'mark' });

// Stops: x, y, label side, label lines; [..] marks a word the spell checker underlines
const stops = [
  [852, 386, 'down', 'Unterm [Lübzer] Feld'],
  [892, 351, 'up', '[Herzbach,] Feuerwehr'],
  [933, 386, 'down', '[Dexhof,]', 'Lahnauer Weg'],
  [974, 351, 'up', '[Dexhof,] Bahnhof'],
  [1015, 422, 'down', '[Dexhof,]', 'Europaschule'],
  [1056, 386, 'up', '[Dexhof,] Marktplatz'],
  [1096, 423, 'down', 'Ackerbach, Fa. Weber'],
  [1137, 386, 'up', 'Ackerbach, Turmstr.'],
  [1178, 386, 'up', 'Glashütten, Alte Bundestr.'],
  [1219, 386, 'up', 'Hotel Krahwinkel'],
  [1260, 423, 'down', '[Mittelnaar,]', '[Maibacher] Str.'],
  [1301, 386, 'up', '[Mittelnaar,] Umgehung B64'],
  [1341, 422, 'up', '[Mittelnaar,]', 'Kevin-Frank-Grundschule'],
  [1341, 467, 'down', 'Roth,', 'Am [Spreth]'],
  [1380, 467, 'up', 'Roth, Obere Dorfstr.'],
  [1380, 509, 'up', 'Glückshof'],
  [1077, 551, 'down', 'Brinkhof,', 'Landgasthaus'],
  [1121, 551, 'down', 'Brinkhof, Kirche'],
  [1165, 551, 'down', 'Lahnauer Forst,', 'Campingplatz'],
  [1209, 551, 'down', '[Hoyerhöfe]'],
  [1253, 551, 'down', '[Hülsbach]'],
  [1297, 551, 'down', 'Bad [Böchsen,] Kinderklinik'],
  [1341, 551, 'down', 'Sportplatz'],
  [1380, 592, 'up', 'Zum Musbach'],
  [1341, 634, 'down', 'Gewerbegebiet'],
  [1380, 676, 'up', 'Industriestr.'],
  [1380, 718, 'up', 'Schulstr.'],
  [1341, 760, 'down', 'ZOB'],
  [1380, 802, 'up', 'Lahnhospital'],
  [1421, 844, 'up', 'Bildungscampus'],
  [1380, 886, 'down', 'An der Kreuzwiese'],
  [1518, 639, 'up', 'Hainstr. ????'],
  [1301, 907, 'down', 'Engelhof Werkstätten'],
  [1258, 874, 'down', 'Engelhof'],
  [1166, 820, 'down', '[Niederloh,] Loher Str.'],
  [1080, 768, 'down', '[Oberloh,] Kirche'],
  [1007, 709, 'down', 'Lems, Wegener-Siedlung'],
  [941, 655, 'down', '[Eibelshain,] Alte Scheune'],
  [899, 655, 'down', '[Eibelshain,] Schulbus'],
  [889, 503, 'down', '[Dilsch,] [Talstr.]'],
  [913, 475, 'up', 'GS']
];

const offsets = {
  up: [[[12, -6]], [[6, -12], [19, 1]]],
  down: [[[-4, 13]], [[-11, 5], [2, 18]]]
};

function label(parent, x, y, side, source) {
  const g = add(parent, 'g', { transform: `translate(${x} ${y}) rotate(-45)` });
  const plain = source.replace(/[\[\]]/g, '');
  const text = add(g, 'text', { 'text-anchor': side === 'up' ? 'start' : 'end' }, plain);
  const origin = side === 'up' ? 0 : -text.getComputedTextLength();
  let removed = 0;
  for (const m of source.matchAll(/\[([^\]]+)\]/g)) {
    const at = m.index - removed;
    removed += 2;
    const start = origin + (at ? text.getSubStringLength(0, at) : 0);
    const width = text.getSubStringLength(at, m[1].length);
    let d = `M${start.toFixed(1)} 3`;
    for (let i = 0; i * 2 < width; i++) d += i % 2 ? 'l2 -2' : 'l2 2';
    add(g, 'path', { d, class: 'wave' });
  }
}

const stopLayer = document.getElementById('stops');
const labelLayer = document.getElementById('labels');
for (const [x, y, side, ...lines] of stops) {
  add(stopLayer, 'circle', { cx: x, cy: y, r: 7 });
  lines.forEach((line, i) => {
    const [dx, dy] = offsets[side][lines.length - 1][i];
    label(labelLayer, x + dx, y + dy, side, line);
  });
}
```
